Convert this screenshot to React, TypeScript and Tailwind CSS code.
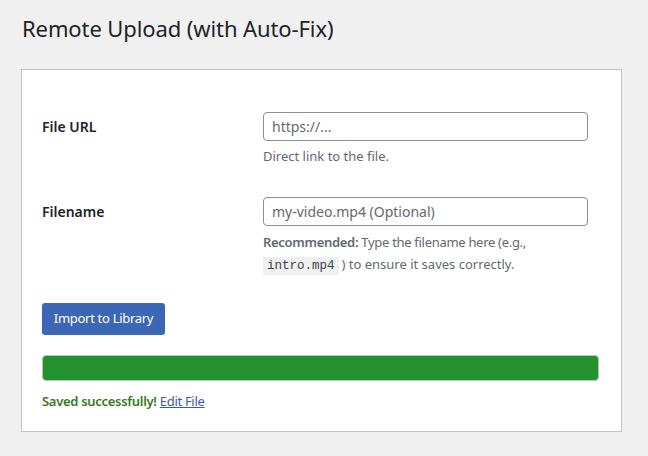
import React from "react";

export default function App() {
  const font = { fontFamily: '"Noto Sans", "Open Sans", Arial, sans-serif' };
  return (
    <div className="min-h-[456px] w-[648px] bg-[#f0f0f1] pl-[21px] pt-[13px]" style={font}>
      <h1 className="text-[22px] leading-[30px] font-normal text-[#1d2327] pl-[1px] tracking-[-0.1px]">
        Remote Upload (with Auto-Fix)
      </h1>
      <div className="mt-[26px] w-[601px] h-[363px] border border-[#c3c4c7] bg-white pl-[20px] pt-[42px]">
        {/* Row 1 */}
        <div className="grid grid-cols-[221px_325px]">
          <div className="h-[29px] flex items-center text-[14px] font-semibold text-[#1d2327]">File URL</div>
          <div>
            <div className="h-[29px] border border-[#8c8f94] rounded-[4px] flex items-center px-[8px] text-[14px] text-[#646970]">
              https://...
            </div>
            <div className="mt-[4px] text-[13px] leading-[22px] text-[#646970]">Direct link to the file.</div>
          </div>
        </div>
        {/* Row 2 */}
        <div className="grid grid-cols-[221px_325px] mt-[30px]">
          <div className="h-[29px] flex items-center text-[14px] font-semibold text-[#1d2327]">Filename</div>
          <div>
            <div className="h-[29px] border border-[#8c8f94] rounded-[4px] flex items-center px-[8px] text-[14px] text-[#646970]">
              my-video.mp4 (Optional)
            </div>
            <div className="mt-[5px] text-[13px] leading-[22px] text-[#646970]">
              <span className="tracking-[-0.3px]">
                <span className="font-semibold">Recommended:</span> Type the filename here (e.g.,
              </span>
              <br />
              <code
                className="bg-[#f0f0f1] text-[#3c434a] text-[12.5px] px-[4px] py-[2px] mr-[3px]"
                style={{ fontFamily: '"Liberation Mono", "DejaVu Sans Mono", monospace' }}
              >
                intro.mp4
              </code>
              ) to ensure it saves correctly.
            </div>
          </div>
        </div>
        <button className="mt-[26px] h-[32px] w-[123px] rounded-[3px] bg-[#3c67b7] text-white text-[13px] tracking-[-0.3px] flex items-center justify-center">
          Import to Library
        </button>
        <div className="mt-[20px] w-[557px] h-[26px] rounded-[4px] border border-[#b8c4b8] bg-[#23922c]" />
        <div className="mt-[10px] text-[13px] leading-[20px] tracking-[-0.3px]">
          <span className="font-semibold text-[#367a1b]">Saved successfully!</span>{" "}
          <a className="underline text-[#3a5aa8]" href="#">Edit File</a>
        </div>
      </div>
    </div>
  );
}
